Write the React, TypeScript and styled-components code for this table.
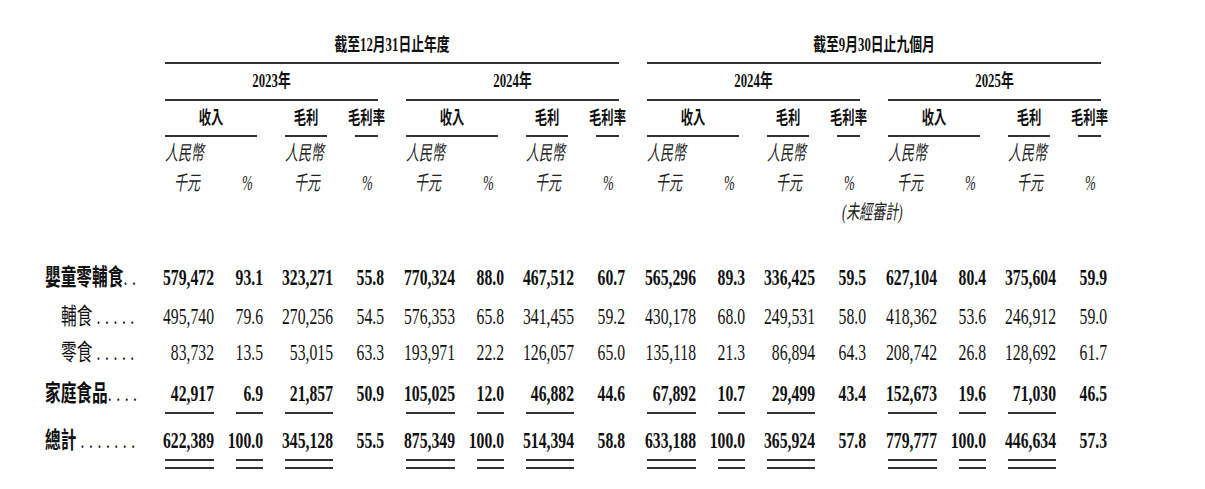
import React from "react";
import styled, { createGlobalStyle } from "styled-components";

const GlobalStyle = createGlobalStyle`
  html, body { margin: 0; padding: 0; background: #ffffff; }
  body {
    font-family: "Liberation Serif", "Noto Sans CJK TC", serif;
    color: #111111;
  }
`;

const COLS = "143px repeat(4, 49px 27px 48px 29px)";
const LINE = "#333333";

const Table = styled.div`
  width: 1205px;
  padding-top: 29px;
`;

const Row = styled.div<{ $h: number }>`
  display: grid;
  grid-template-columns: ${COLS};
  column-gap: 22px;
  height: ${(p) => p.$h}px;
`;

const Body = styled.div`
  padding-top: 32px;
`;

const HeadCell = styled.div<{ $col: string }>`
  grid-column: ${(p) => p.$col};
  margin-right: 6px;
  border-bottom: 2px solid ${LINE};
  display: flex;
  align-items: center;
  justify-content: center;
  white-space: nowrap;
  min-width: 0;
`;

const HeadText = styled.span<{ $size: number }>`
  display: inline-block;
  font-weight: 700;
  font-size: ${(p) => p.$size}px;
  line-height: 1;
  transform: scaleY(1.45);
  color: #111;
`;

const UnitCell = styled.div<{ $col: number; $pl: number }>`
  grid-column: ${(p) => p.$col};
  padding-left: ${(p) => p.$pl}px;
  display: flex;
  align-items: center;
  white-space: nowrap;
  min-width: 0;
`;

const UnitText = styled.span`
  display: inline-block;
  font-style: italic;
  font-weight: 400;
  font-size: 13px;
  line-height: 1;
  transform: scaleY(1.55);
  color: #222;
`;

const Cell = styled.div<{ $pt: number; $pl?: number }>`
  display: flex;
  flex-direction: column;
  padding-top: ${(p) => p.$pt}px;
  padding-left: ${(p) => p.$pl ?? 0}px;
  min-width: 0;
`;

const Value = styled.div<{ $bold?: boolean; $left?: boolean }>`
  height: 24px;
  display: flex;
  align-items: center;
  justify-content: ${(p) => (p.$left ? "flex-start" : "flex-end")};
  font-size: 15.7px;
  line-height: 1;
  font-weight: ${(p) => (p.$bold ? 700 : 400)};
  transform: scaleY(1.47);
  white-space: nowrap;
`;

const Leader = styled.span`
  font-weight: 400;
  letter-spacing: 0.3px;
  white-space: pre;
`;

const Rule = styled.div<{ $double?: boolean }>`
  margin-top: 6px;
  border-top: 2px solid ${LINE};
  height: ${(p) => (p.$double ? "6px" : "0")};
  border-bottom: ${(p) => (p.$double ? `2px solid ${LINE}` : "none")};
`;

type DataRow = {
  label: string;
  dots: string;
  bold: boolean;
  indent: number;
  h: number;
  pt: number;
  rule?: "single" | "double";
  vals: string[];
};

const rows: DataRow[] = [
  {
    label: "嬰童零輔食",
    dots: ". .",
    bold: true,
    indent: 45,
    h: 38,
    pt: 7,
    vals: ["579,472", "93.1", "323,271", "55.8", "770,324", "88.0", "467,512", "60.7", "565,296", "89.3", "336,425", "59.5", "627,104", "80.4", "375,604", "59.9"],
  },
  {
    label: "輔食",
    dots: " . . . . .",
    bold: false,
    indent: 61,
    h: 40,
    pt: 8,
    vals: ["495,740", "79.6", "270,256", "54.5", "576,353", "65.8", "341,455", "59.2", "430,178", "68.0", "249,531", "58.0", "418,362", "53.6", "246,912", "59.0"],
  },
  {
    label: "零食",
    dots: " . . . . .",
    bold: false,
    indent: 61,
    h: 32,
    pt: 4,
    vals: ["83,732", "13.5", "53,015", "63.3", "193,971", "22.2", "126,057", "65.0", "135,118", "21.3", "86,894", "64.3", "208,742", "26.8", "128,692", "61.7"],
  },
  {
    label: "家庭食品",
    dots: ". . . .",
    bold: true,
    indent: 45,
    h: 60,
    pt: 13,
    rule: "single",
    vals: ["42,917", "6.9", "21,857", "50.9", "105,025", "12.0", "46,882", "44.6", "67,892", "10.7", "29,499", "43.4", "152,673", "19.6", "71,030", "46.5"],
  },
  {
    label: "總計",
    dots: " . . . . . . .",
    bold: true,
    indent: 45,
    h: 50,
    pt: 0,
    rule: "double",
    vals: ["622,389", "100.0", "345,128", "55.5", "875,349", "100.0", "514,394", "58.8", "633,188", "100.0", "365,924", "57.8", "779,777", "100.0", "446,634", "57.3"],
  },
];

const years = ["2023年", "2024年", "2024年", "2025年"];
const groups = [0, 1, 2, 3];

export default function App() {
  return (
    <>
      <GlobalStyle />
      <Table>
        <Row $h={35}>
          <HeadCell $col="2 / 10">
            <HeadText $size={12.8}>截至12月31日止年度</HeadText>
          </HeadCell>
          <HeadCell $col="10 / 18">
            <HeadText $size={12.8}>截至9月30日止九個月</HeadText>
          </HeadCell>
        </Row>
        <Row $h={37}>
          {groups.map((g) => (
            <HeadCell key={g} $col={`${2 + 4 * g} / ${6 + 4 * g}`}>
              <HeadText $size={12.8}>{years[g]}</HeadText>
            </HeadCell>
          ))}
        </Row>
        <Row $h={36}>
          {groups.map((g) => (
            <React.Fragment key={g}>
              <HeadCell $col={`${2 + 4 * g} / ${4 + 4 * g}`}>
                <HeadText $size={12.3}>收入</HeadText>
              </HeadCell>
              <HeadCell $col={`${4 + 4 * g} / ${5 + 4 * g}`}>
                <HeadText $size={12.3}>毛利</HeadText>
              </HeadCell>
              <HeadCell $col={`${5 + 4 * g} / ${6 + 4 * g}`}>
                <HeadText $size={12.3}>毛利率</HeadText>
              </HeadCell>
            </React.Fragment>
          ))}
        </Row>
        <Row $h={32}>
          {groups.map((g) => (
            <React.Fragment key={g}>
              <UnitCell $col={2 + 4 * g} $pl={0}>
                <UnitText>人民幣</UnitText>
              </UnitCell>
              <UnitCell $col={4 + 4 * g} $pl={0}>
                <UnitText>人民幣</UnitText>
              </UnitCell>
            </React.Fragment>
          ))}
        </Row>
        <Row $h={28}>
          {groups.map((g) => (
            <React.Fragment key={g}>
              <UnitCell $col={2 + 4 * g} $pl={9}>
                <UnitText>千元</UnitText>
              </UnitCell>
              <UnitCell $col={3 + 4 * g} $pl={6}>
                <UnitText>%</UnitText>
              </UnitCell>
              <UnitCell $col={4 + 4 * g} $pl={9}>
                <UnitText>千元</UnitText>
              </UnitCell>
              <UnitCell $col={5 + 4 * g} $pl={7}>
                <UnitText>%</UnitText>
              </UnitCell>
            </React.Fragment>
          ))}
        </Row>
        <Row $h={30}>
          <UnitCell $col={5 + 4 * 2} $pl={5}>
            <UnitText>(未經審計)</UnitText>
          </UnitCell>
        </Row>
        <Body>
          {rows.map((r) => (
            <Row key={r.label} $h={r.h}>
              <Cell $pt={r.pt} $pl={r.indent}>
                <Value $bold={r.bold} $left>
                  {r.label}
                  <Leader>{r.dots}</Leader>
                </Value>
              </Cell>
              {r.vals.map((v, i) => (
                <Cell key={i} $pt={r.pt}>
                  <Value $bold={r.bold}>{v}</Value>
                  {r.rule && i % 4 !== 3 && <Rule $double={r.rule === "double"} />}
                </Cell>
              ))}
            </Row>
          ))}
        </Body>
      </Table>
    </>
  );
}
